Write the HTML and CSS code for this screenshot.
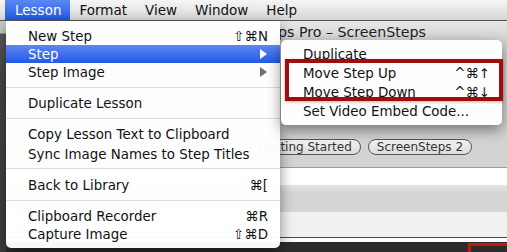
FILE: index.html
```html
<!DOCTYPE html>
<html>
<head>
    <title>Lesson Menu</title>
    <link rel="stylesheet" href="styles.css">
</head>
<body>
    <div class="menubar">
        <div class="menu-title active">Lesson</div>
        <div class="menu-title">Format</div>
        <div class="menu-title">View</div>
        <div class="menu-title">Window</div>
        <div class="menu-title">Help</div>
    </div>

    <div class="desk">
        <div class="side-strip"></div>
        <div class="window">
            <div class="titlebar">
                <div class="title-clip"><span>ScreenSteps Pro – ScreenSteps</span></div>
            </div>
            <div class="toolbar">
                <span class="pill">Getting Started</span>
                <span class="pill">ScreenSteps 2</span>
            </div>
            <div class="band-white"></div>
            <div class="band-grey"></div>
            <div class="band-paper"></div>
            <div class="band-light"></div>
            <div class="band-dark"><div class="red-corner"></div></div>
        </div>

        <!-- the open Lesson menu -->
        <div class="menu main-menu">
            <div class="item"><span>New Step</span><span class="key">⇧⌘N</span></div>
            <div class="item selected"><span>Step</span><span class="arrow"></span></div>
            <div class="item"><span>Step Image</span><span class="arrow"></span></div>
            <div class="sep"></div>
            <div class="item"><span>Duplicate Lesson</span></div>
            <div class="sep"></div>
            <div class="item"><span>Copy Lesson Text to Clipboard</span></div>
            <div class="item tall"><span>Sync Image Names to Step Titles</span></div>
            <div class="sep wide"></div>
            <div class="item"><span>Back to Library</span><span class="key">⌘[</span></div>
            <div class="sep"></div>
            <div class="item"><span>Clipboard Recorder</span><span class="key">⌘R</span></div>
            <div class="item"><span>Capture Image</span><span class="key">⇧⌘D</span></div>
        </div>

        <div class="menu sub-menu">
            <div class="item"><span>Duplicate</span></div>
            <div class="item"><span>Move Step Up</span><span class="key">^⌘↑</span></div>
            <div class="item"><span>Move Step Down</span><span class="key">^⌘↓</span></div>
            <div class="item"><span>Set Video Embed Code...</span></div>
        </div>

        <div class="callout"></div>
    </div>
</body>
</html>
```

FILE: styles.css
```css
body {
    margin: 0;
    width: 507px;
    height: 252px;
    overflow: hidden;
    font-family: "DejaVu Sans", sans-serif;
    background: #3a3a3a;
}
.menubar {
    display: flex;
    height: 20px;
    padding-left: 5px;
    background: linear-gradient(#f6f6f6, #d6d6d6);
    border-bottom: 1px solid #555;
}
.menu-title {
    padding: 0 9px;
    font-size: 13.5px;
    line-height: 20px;
    color: #111;
}
.menu-title.active {
    padding-left: 10px;
    background: linear-gradient(#5b89f3, #1f58e6);
    color: white;
}
.desk {
    position: relative;
    display: flex;
    height: 231px;
}
.side-strip {
    width: 6px;
    background: linear-gradient(#cacaca 0, #cacaca 12px, #5a5a5a 13px, #474747 60px, #3c3c3c 100%);
}
.window {
    flex: 1;
    display: flex;
    flex-direction: column;
}
.titlebar {
    height: 21px;
    padding-left: 274px;
    background: linear-gradient(#e6e6e6, #d2d2d2);
}
.title-clip {
    display: flex;
    justify-content: flex-end;
    width: 146px;
    overflow: hidden;
    font-size: 14.2px;
    line-height: 22px;
    color: #222;
    white-space: nowrap;
}
.toolbar {
    height: 126px;
    display: flex;
    align-items: flex-end;
    gap: 7px;
    padding: 0 0 12px 244px;
    box-sizing: border-box;
    background: #d3d3d3;
    border-bottom: 1px solid #9c9c9c;
}
.pill {
    height: 14px;
    padding: 0 8px;
    font-size: 12px;
    line-height: 14px;
    color: #333;
    border: 1px solid #555;
    border-radius: 8px;
    background: linear-gradient(#f4f4f4, #dcdcdc);
    white-space: nowrap;
}
.band-white {
    height: 17px;
    background: #fff;
}
.band-grey {
    height: 27px;
    background: linear-gradient(#e6e6e6, #d5d5d5 30%, #d5d5d5);
}
.band-paper {
    height: 25px;
    background: #f1f1f1;
    border-bottom: 1px solid #4a4a4a;
}
.band-light {
    height: 4px;
    background: #fdfdfd;
}
.band-dark {
    flex: 1;
    position: relative;
    background: #2c2c2c;
}
.red-corner {
    position: absolute;
    left: 462px;
    top: 1px;
    right: 0;
    bottom: 0;
    border-top: 3px solid #c01a0a;
    border-left: 3px solid #c01a0a;
}

.menu {
    position: absolute;
    background: rgba(255, 255, 255, 0.97);
    box-shadow: 0 5px 14px rgba(0, 0, 0, 0.45);
    font-size: 13.4px;
    color: #111;
}
.main-menu {
    left: 6px;
    top: 0;
    width: 274px;
    padding: 6px 0 5px;
    border-radius: 0 0 5px 5px;
}
.sub-menu {
    left: 281px;
    top: 19px;
    width: 221px;
    padding: 5px 0 4px;
    border-radius: 5px;
}
.item {
    display: flex;
    justify-content: space-between;
    align-items: center;
    height: 18px;
    padding: 0 12px 0 22px;
    white-space: nowrap;
}
.item.tall {
    height: 19px;
    align-items: flex-end;
}
.sub-menu .item {
    height: 19px;
}
.item.selected {
    background: linear-gradient(#5f86f2, #2159e6);
    color: white;
}
.arrow {
    width: 0;
    height: 0;
    margin-right: 1px;
    border-top: 5px solid transparent;
    border-bottom: 5px solid transparent;
    border-left: 7px solid #6e6e6e;
}
.selected .arrow {
    border-left-color: white;
}
.sep {
    height: 13px;
    background: linear-gradient(transparent 6px, #dedede 6px, #dedede 7px, transparent 7px);
}
.sep.wide {
    height: 14px;
}
.callout {
    position: absolute;
    left: 285px;
    top: 38px;
    width: 218px;
    height: 42px;
    box-sizing: border-box;
    border: 4px solid #a30c0c;
    box-shadow: 0 1px 3px rgba(0, 0, 0, 0.3);
}
```
